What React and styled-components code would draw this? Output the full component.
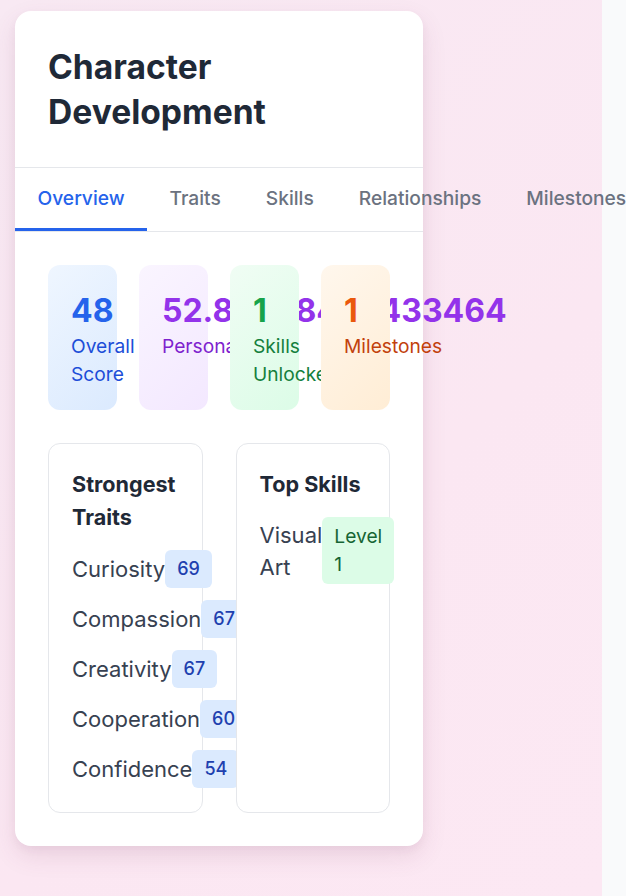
import React from "react";
import styled, { createGlobalStyle } from "styled-components";

const Global = createGlobalStyle`
  html, body { margin: 0; padding: 0; }
  body {
    font-family: Inter, "Noto Sans", "Liberation Sans", sans-serif;
    background: #f9fafb;
  }
  * { box-sizing: border-box; }
`;

const Stage = styled.main`
  width: 602px;
  min-height: 896px;
  padding: 11px 0 0 15px;
  background: linear-gradient(135deg, #f8e9f3 0%, #fbe7f2 60%, #fce8f3 100%);
`;

const Card = styled.section`
  width: 408px;
  background: #ffffff;
  border-radius: 16px;
  box-shadow: 0 10px 25px rgba(120, 60, 100, 0.12), 0 4px 8px rgba(120, 60, 100, 0.05);
`;

const Header = styled.header`
  padding: 33px 33px 33px;
  border-bottom: 1px solid #e5e7eb;
`;

const Title = styled.h1`
  margin: 0;
  font-size: 33.6px;
  line-height: 45px;
  font-weight: 700;
  color: #1f2937;
`;

const TabBar = styled.nav`
  display: flex;
  border-bottom: 1px solid #e5e7eb;
`;

const Tab = styled.div`
  flex-shrink: 0;
  white-space: nowrap;
  padding: 18px 22.5px 18px;
  font-size: 19.2px;
  line-height: 24px;
  font-weight: 500;
  color: ${(p) => (p.$active ? "#2563eb" : "#6b7280")};
  border-bottom: 3px solid ${(p) => (p.$active ? "#2563eb" : "transparent")};
`;

const Body = styled.div`
  padding: 33px;
  display: flex;
  flex-direction: column;
  gap: 33px;
`;

const StatGrid = styled.div`
  display: grid;
  grid-template-columns: repeat(4, minmax(0, 1fr));
  gap: 22px;
`;

const tones = {
  blue: { bg: "linear-gradient(135deg, #eff6ff, #dbeafe)", num: "#2563eb", label: "#1d4ed8" },
  purple: { bg: "linear-gradient(135deg, #faf5ff, #f3e8ff)", num: "#9333ea", label: "#7e22ce" },
  green: { bg: "linear-gradient(135deg, #f0fdf4, #dcfce7)", num: "#16a34a", label: "#15803d" },
  orange: { bg: "linear-gradient(135deg, #fff7ed, #ffedd5)", num: "#ea580c", label: "#c2410c" },
};

const StatBox = styled.div`
  min-height: 145px;
  padding: 25px 23px 22px;
  border-radius: 12px;
  background: ${(p) => tones[p.$tone].bg};
`;

const StatValue = styled.div`
  font-size: 32px;
  line-height: 42px;
  font-weight: 700;
  white-space: nowrap;
  color: ${(p) => tones[p.$tone].num};
`;

const StatLabel = styled.div`
  font-size: 19.2px;
  line-height: 28px;
  color: ${(p) => tones[p.$tone].label};
`;

const PanelGrid = styled.div`
  display: grid;
  grid-template-columns: repeat(2, minmax(0, 1fr));
  gap: 33px;
`;

const Panel = styled.div`
  background: #ffffff;
  border: 1px solid #e5e7eb;
  border-radius: 12px;
  padding: 24px 23px;
`;

const PanelTitle = styled.h3`
  margin: 0 0 16px;
  font-size: 21.6px;
  line-height: 33px;
  font-weight: 700;
  color: #1f2937;
`;

const List = styled.div`
  display: flex;
  flex-direction: column;
  gap: 12px;
`;

const Row = styled.div`
  display: flex;
  justify-content: space-between;
  align-items: center;
`;

const Name = styled.span`
  font-size: 22px;
  line-height: 32px;
  color: #374151;
`;

const Badge = styled.span`
  padding: 6px 12px;
  border-radius: 6px;
  font-size: ${(p) => (p.$tone === "green" ? "19.2px" : "18px")};
  line-height: ${(p) => (p.$tone === "green" ? "27.5px" : "26px")};
  font-weight: ${(p) => (p.$tone === "green" ? 400 : 500)};
  background: ${(p) => (p.$tone === "green" ? "#dcfce7" : "#dbeafe")};
  color: ${(p) => (p.$tone === "green" ? "#166534" : "#1e40af")};
`;

const tabs = ["Overview", "Traits", "Skills", "Relationships", "Milestones"];

const stats = [
  { tone: "blue", value: "48", label: "Overall Score" },
  { tone: "purple", value: "52.80258420433464", label: "Personality" },
  { tone: "green", value: "1", label: "Skills Unlocked" },
  { tone: "orange", value: "1", label: "Milestones" },
];

const traits = [
  ["Curiosity", 69],
  ["Compassion", 67],
  ["Creativity", 67],
  ["Cooperation", 60],
  ["Confidence", 54],
];

export default function App() {
  return (
    <>
      <Global />
      <Stage>
        <Card>
          <Header>
            <Title>Character Development</Title>
          </Header>
          <TabBar>
            {tabs.map((t, i) => (
              <Tab key={t} $active={i === 0}>
                {t}
              </Tab>
            ))}
          </TabBar>
          <Body>
            <StatGrid>
              {stats.map((s) => (
                <StatBox key={s.label} $tone={s.tone}>
                  <StatValue $tone={s.tone}>{s.value}</StatValue>
                  <StatLabel $tone={s.tone}>{s.label}</StatLabel>
                </StatBox>
              ))}
            </StatGrid>
            <PanelGrid>
              <Panel>
                <PanelTitle>Strongest Traits</PanelTitle>
                <List>
                  {traits.map(([n, v]) => (
                    <Row key={n}>
                      <Name>{n}</Name>
                      <Badge>{v}</Badge>
                    </Row>
                  ))}
                </List>
              </Panel>
              <Panel>
                <PanelTitle>Top Skills</PanelTitle>
                <List>
                  <Row>
                    <Name>Visual Art</Name>
                    <Badge $tone="green">Level 1</Badge>
                  </Row>
                </List>
              </Panel>
            </PanelGrid>
          </Body>
        </Card>
      </Stage>
    </>
  );
}
